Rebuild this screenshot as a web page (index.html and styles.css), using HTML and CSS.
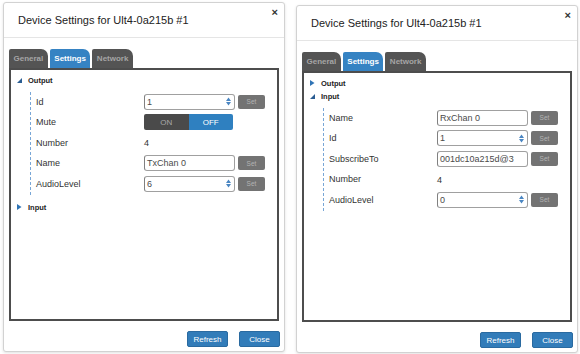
FILE: index.html
```html
<!DOCTYPE html>
<html>
<head>
<meta charset="utf-8">
<link rel="stylesheet" href="styles.css">
</head>
<body>
<div class="stage">
  <section class="dialog">
    <header class="dialog-head">
      <h1 class="dialog-title">Device Settings for Ult4-0a215b #1</h1>
      <span class="dialog-close">×</span>
    </header>
    <div class="dialog-body">
      <nav class="tabs">
        <span class="tab">General</span>
        <span class="tab tab--active">Settings</span>
        <span class="tab">Network</span>
      </nav>
      <div class="panel">
        <div class="node-head">
          <svg class="tri" width="5" height="5" viewBox="0 0 5 5"><path d="M5 0 L5 5 L0 5 Z" fill="#2b5d92"/></svg>
          <span>Output</span>
        </div>
        <div class="node-children">
          <span class="lbl">Id</span>
          <div class="field"><span class="val">1</span><svg class="spin" width="5" height="9" viewBox="0 0 5 9"><path d="M0 4 L2.5 0.5 L5 4 Z M0 5 L2.5 8.5 L5 5 Z" fill="#4a86c2"/></svg></div>
          <span class="set">Set</span>

          <span class="lbl">Mute</span>
          <div class="toggle"><span class="toggle-on">ON</span><span class="toggle-off">OFF</span></div>
          <span></span>

          <span class="lbl">Number</span>
          <span class="num">4</span>
          <span></span>

          <span class="lbl">Name</span>
          <div class="field"><span class="val">TxChan 0</span></div>
          <span class="set">Set</span>

          <span class="lbl">AudioLevel</span>
          <div class="field"><span class="val">6</span><svg class="spin" width="5" height="9" viewBox="0 0 5 9"><path d="M0 4 L2.5 0.5 L5 4 Z M0 5 L2.5 8.5 L5 5 Z" fill="#4a86c2"/></svg></div>
          <span class="set">Set</span>
        </div>
        <div class="node-head node-head--spaced">
          <svg class="tri" width="5" height="6" viewBox="0 0 5 6"><path d="M0 0 L4.5 3 L0 6 Z" fill="#2f74b5"/></svg>
          <span>Input</span>
        </div>
      </div>
    </div>
    <footer class="dialog-foot">
      <span class="btn">Refresh</span>
      <span class="btn">Close</span>
    </footer>
  </section>

  <section class="dialog dialog--right">
    <header class="dialog-head">
      <h1 class="dialog-title">Device Settings for Ult4-0a215b #1</h1>
      <span class="dialog-close">×</span>
    </header>
    <div class="dialog-body">
      <nav class="tabs">
        <span class="tab">General</span>
        <span class="tab tab--active">Settings</span>
        <span class="tab">Network</span>
      </nav>
      <div class="panel">
        <div class="node-head">
          <svg class="tri" width="5" height="6" viewBox="0 0 5 6"><path d="M0 0 L4.5 3 L0 6 Z" fill="#2f74b5"/></svg>
          <span>Output</span>
        </div>
        <div class="node-head">
          <svg class="tri" width="5" height="5" viewBox="0 0 5 5"><path d="M5 0 L5 5 L0 5 Z" fill="#2b5d92"/></svg>
          <span>Input</span>
        </div>
        <div class="node-children">
          <span class="lbl">Name</span>
          <div class="field"><span class="val">RxChan 0</span></div>
          <span class="set">Set</span>

          <span class="lbl">Id</span>
          <div class="field"><span class="val">1</span><svg class="spin" width="5" height="9" viewBox="0 0 5 9"><path d="M0 4 L2.5 0.5 L5 4 Z M0 5 L2.5 8.5 L5 5 Z" fill="#4a86c2"/></svg></div>
          <span class="set">Set</span>

          <span class="lbl">SubscribeTo</span>
          <div class="field"><span class="val">001dc10a215d@3</span></div>
          <span class="set">Set</span>

          <span class="lbl">Number</span>
          <span class="num">4</span>
          <span></span>

          <span class="lbl">AudioLevel</span>
          <div class="field"><span class="val">0</span><svg class="spin" width="5" height="9" viewBox="0 0 5 9"><path d="M0 4 L2.5 0.5 L5 4 Z M0 5 L2.5 8.5 L5 5 Z" fill="#4a86c2"/></svg></div>
          <span class="set">Set</span>
        </div>
      </div>
    </div>
    <footer class="dialog-foot">
      <span class="btn">Refresh</span>
      <span class="btn">Close</span>
    </footer>
  </section>
</div>
</body>
</html>
```
FILE: styles.css
```css
* { box-sizing: border-box; margin: 0; padding: 0; }
html, body { background: #fff; }
body {
  font-family: "Liberation Sans", Arial, sans-serif;
  color: #333;
  width: 580px;
  height: 354px;
  overflow: hidden;
}
.stage {
  display: flex;
  gap: 11px;
  padding: 2px 0 0 3px;
  align-items: flex-start;
}
.dialog {
  width: 282px;
  height: 350px;
  background: #fff;
  border: 1px solid #d2d2d2;
  border-radius: 3px;
  box-shadow: 0 1px 3px rgba(0,0,0,0.12);
  display: flex;
  flex-direction: column;
}
.dialog--right {
  margin-top: 3px;
  height: 348px;
}
.dialog-head {
  height: 35px;
  flex: none;
  border-bottom: 1px solid #e5e5e5;
  display: flex;
  justify-content: space-between;
  align-items: flex-start;
  padding: 0 6px 0 14px;
}
.dialog-title {
  font-size: 11px;
  font-weight: normal;
  color: #222;
  line-height: 13px;
  margin-top: 10.5px;
}
.dialog-close {
  font-size: 11px;
  font-weight: bold;
  line-height: 11px;
  color: #333;
  margin-top: 4px;
}
.dialog-body {
  flex: 1;
  display: flex;
  flex-direction: column;
  padding: 11px 5px 0 5px;
}
.tabs {
  display: flex;
  gap: 2px;
  height: 19px;
  flex: none;
}
.tab {
  background: #545454;
  color: #a5a5a5;
  font-size: 8px;
  font-weight: bold;
  line-height: 19px;
  padding: 0 4.5px;
  border-radius: 2px 7px 0 0;
}
.tab--active {
  background: #3683c3;
  color: #fff;
}
.panel {
  flex: 1;
  border: 2px solid #4d4d4d;
  padding: 3.5px 0 0 0;
}
.node-head {
  display: flex;
  align-items: center;
  gap: 6px;
  height: 13px;
  padding-left: 6px;
  font-size: 7.5px;
  font-weight: bold;
  color: #222;
}
.node-head--spaced {
  margin-top: 6px;
}
.tri { display: block; flex: none; }
.node-children {
  margin: 5px 0 0 19px;
  border-left: 1px dashed #78a6d6;
  padding: 2px 0 3px 5px;
  display: grid;
  grid-template-columns: 105px 91px 27px;
  grid-auto-rows: 16px;
  column-gap: 3px;
  row-gap: 4.5px;
  align-items: center;
}
.lbl {
  font-size: 9px;
  color: #333;
}
.num {
  font-size: 9px;
  color: #333;
  padding-top: 1px;
}
.field {
  height: 16px;
  border: 1px solid #a0a0a0;
  border-left-color: #808080;
  border-radius: 3px;
  display: flex;
  align-items: center;
  justify-content: space-between;
  padding: 0 3px 0 2px;
  background: #fff;
}
.val {
  font-size: 9px;
  color: #4a4a4a;
}
.spin { display: block; flex: none; }
.set {
  height: 14px;
  background: #737373;
  color: #b4b4b4;
  font-size: 6.5px;
  border-radius: 2px;
  display: flex;
  align-items: center;
  justify-content: center;
}
.toggle {
  width: 89px;
  height: 16px;
  display: flex;
  border-radius: 2px;
  overflow: hidden;
  font-size: 8px;
}
.toggle-on, .toggle-off {
  flex: 1;
  display: flex;
  align-items: center;
  justify-content: center;
}
.toggle-on {
  background: #4a4a4a;
  color: #a8a8a8;
}
.toggle-off {
  background: #2f80c0;
  color: #fff;
}
.dialog-foot {
  flex: none;
  height: 30px;
  display: flex;
  justify-content: flex-end;
  align-items: flex-start;
  gap: 11px;
  padding: 10px 4px 0 0;
}
.btn {
  width: 41px;
  height: 16px;
  background: #327cb9;
  border: 1px solid #2a6aa0;
  border-radius: 2px;
  color: #fff;
  font-size: 8px;
  display: flex;
  align-items: center;
  justify-content: center;
}
```
